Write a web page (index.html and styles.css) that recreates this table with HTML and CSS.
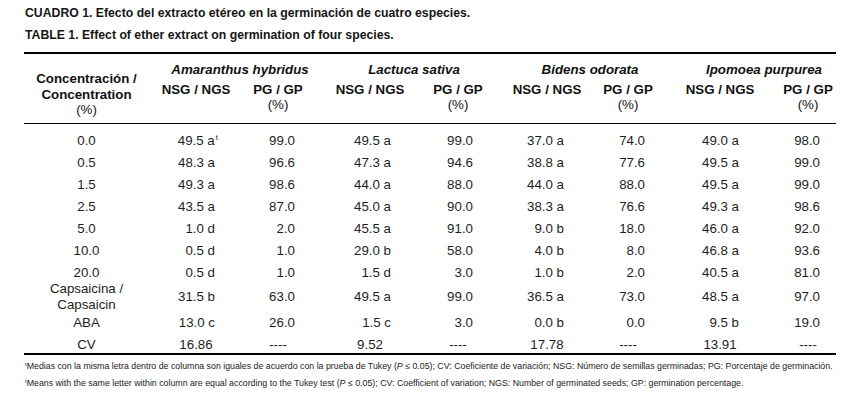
FILE: index.html
```html
<!DOCTYPE html>
<html lang="es">
<head>
<meta charset="utf-8">
<title>Cuadro 1</title>
<link rel="stylesheet" href="styles.css">
</head>
<body>
<div class="page">
  <p class="title">CUADRO 1. Efecto del extracto etéreo en la germinación de cuatro especies.</p>
  <p class="title">TABLE 1. Effect of ether extract on germination of four species.</p>
  <table class="data">
    <colgroup>
      <col class="w0"><col class="w1"><col class="w2"><col class="w3"><col class="w4"><col class="w5"><col class="w6"><col class="w7"><col class="w8">
    </colgroup>
    <thead>
      <tr class="hr1">
        <th rowspan="2" class="conc">Concentración /<br>Concentration<br><span class="pct">(%)</span></th>
        <th colspan="2" class="sp sp-a">Amaranthus hybridus</th>
        <th colspan="2" class="sp sp-l">Lactuca sativa</th>
        <th colspan="2" class="sp sp-b">Bidens odorata</th>
        <th colspan="2" class="sp sp-i">Ipomoea purpurea</th>
      </tr>
      <tr class="hr2">
        <th class="a1">NSG / NGS</th><th class="a2">PG / GP<br><span class="pct">(%)</span></th>
        <th class="l1">NSG / NGS</th><th class="l2">PG / GP<br><span class="pct">(%)</span></th>
        <th class="b1">NSG / NGS</th><th class="b2">PG / GP<br><span class="pct">(%)</span></th>
        <th class="i1">NSG / NGS</th><th class="i2">PG / GP<br><span class="pct">(%)</span></th>
      </tr>
    </thead>
    <tbody>
      <tr class="first"><td>0.0</td><td>49.5 a<sup class="mark">t</sup></td><td>99.0</td><td>49.5 a</td><td>99.0</td><td>37.0 a</td><td>74.0</td><td>49.0 a</td><td>98.0</td></tr>
      <tr><td>0.5</td><td>48.3 a</td><td>96.6</td><td>47.3 a</td><td>94.6</td><td>38.8 a</td><td>77.6</td><td>49.5 a</td><td>99.0</td></tr>
      <tr><td>1.5</td><td>49.3 a</td><td>98.6</td><td>44.0 a</td><td>88.0</td><td>44.0 a</td><td>88.0</td><td>49.5 a</td><td>99.0</td></tr>
      <tr><td>2.5</td><td>43.5 a</td><td>87.0</td><td>45.0 a</td><td>90.0</td><td>38.3 a</td><td>76.6</td><td>49.3 a</td><td>98.6</td></tr>
      <tr><td>5.0</td><td>1.0 d</td><td>2.0</td><td>45.5 a</td><td>91.0</td><td>9.0 b</td><td>18.0</td><td>46.0 a</td><td>92.0</td></tr>
      <tr><td>10.0</td><td>0.5 d</td><td>1.0</td><td>29.0 b</td><td>58.0</td><td>4.0 b</td><td>8.0</td><td>46.8 a</td><td>93.6</td></tr>
      <tr class="r20"><td>20.0</td><td>0.5 d</td><td>1.0</td><td>1.5 d</td><td>3.0</td><td>1.0 b</td><td>2.0</td><td>40.5 a</td><td>81.0</td></tr>
      <tr class="caps"><td>Capsaicina /<br>Capsaicin</td><td>31.5 b</td><td>63.0</td><td>49.5 a</td><td>99.0</td><td>36.5 a</td><td>73.0</td><td>48.5 a</td><td>97.0</td></tr>
      <tr class="aba"><td>ABA</td><td>13.0 c</td><td>26.0</td><td>1.5 c</td><td>3.0</td><td>0.0 b</td><td>0.0</td><td>9.5 b</td><td>19.0</td></tr>
      <tr class="cv"><td>CV</td><td class="a1">16.86</td><td class="a2">----</td><td class="l1">9.52</td><td class="l2">----</td><td class="b1">17.78</td><td class="b2">----</td><td class="i1">13.91</td><td class="i2">----</td></tr>
    </tbody>
  </table>
  <p class="note first-note"><sup class="fmark">t</sup>Medias con la misma letra dentro de columna son iguales de acuerdo con la prueba de Tukey (<i>P</i> ≤ 0.05); CV: Coeficiente de variación; NSG: Número de semillas germinadas; PG: Porcentaje de germinación.</p>
  <p class="note"><sup class="fmark">t</sup>Means with the same letter within column are equal according to the Tukey test (<i>P</i> ≤ 0.05); CV: Coefficient of variation; NGS: Number of germinated seeds; GP: germination percentage.</p>
</div>
</body>
</html>
```

FILE: styles.css
```css
html, body {
  margin: 0;
  padding: 0;
  background: #ffffff;
}

body {
  font-family: "Liberation Sans", Arial, sans-serif;
  color: #1e1e1e;
}

.page {
  padding: 2px 0 0 24px;
  width: 812px;
}

.title {
  margin: 0;
  padding-left: 1px;
  font-size: 12.25px;
  font-weight: bold;
  line-height: 22px;
  color: #151515;
}

.data {
  margin-top: 6px;
  width: 812px;
  table-layout: fixed;
  border-collapse: separate;
  border-spacing: 0;
  border-top: 2px solid #000;
  border-bottom: 2px solid #000;
  font-size: 13.3px;
}

.w0 { width: 125px; }
.w1 { width: 87px; }
.w2 { width: 87px; }
.w3 { width: 90px; }
.w4 { width: 88px; }
.w5 { width: 86px; }
.w6 { width: 86px; }
.w7 { width: 90px; }
.w8 { width: 73px; }

.data th,
.data td {
  padding: 0;
}

.data thead th {
  font-weight: bold;
  line-height: 15.5px;
  vertical-align: top;
  text-align: center;
  color: #111;
}

.data .pct {
  font-weight: normal;
}

.data .hr1 .sp {
  padding-top: 8px;
  padding-bottom: 4px;
  font-style: italic;
}

.data .hr1 .sp-a { padding-left: 8px; }
.data .hr1 .sp-l { padding-left: 4px; }
.data .hr1 .sp-b { padding-left: 6px; }
.data .hr1 .sp-i { padding-left: 19px; }

.data .hr1 .conc {
  padding-top: 17px;
  border-bottom: 1px solid #000;
}

.data .hr2 th {
  padding-bottom: 10.5px;
  border-bottom: 1px solid #000;
}

.data .a1 { padding-left: 7px; }
.data .a2 { padding-right: 3px; }
.data .l1 { padding-left: 4px; }
.data .l2 { padding-left: 2px; }
.data .b1 { padding-left: 6px; }
.data .b2 { padding-right: 4px; }
.data .i1 { padding-left: 4px; }
.data .i2 { padding-left: 17px; }

/* body rows */
.data tbody td {
  line-height: 15px;
  padding-top: 3.5px;
  padding-bottom: 3.5px;
  text-align: right;
  vertical-align: middle;
  white-space: nowrap;
}

.data tbody td:nth-child(1) { text-align: center; }
.data tbody td:nth-child(2) { padding-right: 21px; }
.data tbody td:nth-child(3) { padding-right: 28px; }
.data tbody td:nth-child(4) { padding-right: 22px; }
.data tbody td:nth-child(5) { padding-right: 28px; }
.data tbody td:nth-child(6) { padding-right: 23px; }
.data tbody td:nth-child(7) { padding-right: 28px; }
.data tbody td:nth-child(8) { padding-right: 24px; }
.data tbody td:nth-child(9) { padding-right: 16px; }

.data tbody .first td { padding-top: 8.5px; }
.data tbody .r20 td { padding-bottom: 1px; }

.data tbody .caps td {
  line-height: 16px;
  padding-top: 0;
  padding-bottom: 0;
}

.data tbody .aba td {
  padding-top: 2.5px;
  padding-bottom: 2.5px;
}

.data tbody .cv td {
  padding-top: 4px;
  padding-bottom: 1px;
  text-align: center;
}

.data tbody .cv td.a1,
.data tbody .cv td.l1,
.data tbody .cv td.b1,
.data tbody .cv td.i1,
.data tbody .cv td.i2,
.data tbody .cv td.l2 { padding-right: 0; }
.data tbody .cv td.a2 { padding-right: 3px; }
.data tbody .cv td.b2 { padding-right: 4px; }

.mark {
  font-size: 8px;
  line-height: 0;
  vertical-align: 5px;
  margin-right: -3px;
  margin-left: 1px;
}

.note {
  margin: 0;
  padding-left: 1px;
  font-size: 8.8px;
  line-height: 17px;
  color: #222;
  white-space: nowrap;
}

.first-note {
  margin-top: 3px;
}

.fmark {
  font-size: 6px;
  line-height: 0;
  vertical-align: 3px;
}
```
